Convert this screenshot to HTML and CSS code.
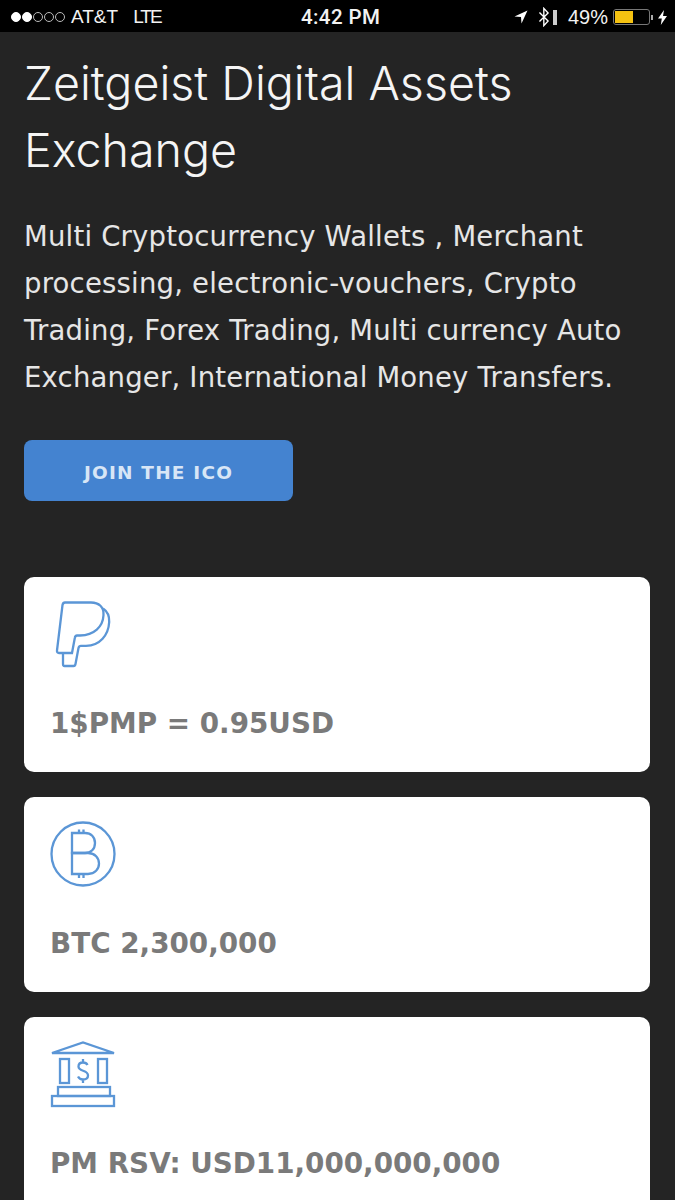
FILE: index.html
```html
<!DOCTYPE html>
<html lang="en">
<head>
    <meta charset="UTF-8">
    <meta name="viewport" content="width=device-width, initial-scale=1.0">
    <title>Zeitgeist Digital Assets Exchange</title>
    <link rel="stylesheet" href="styles.css">
</head>
<body>
    <div class="status-bar">
        <div class="status-left">
            <span class="signal">
                <i class="dot full"></i><i class="dot full"></i><i class="dot"></i><i class="dot"></i><i class="dot"></i>
            </span>
            <span class="carrier">AT&amp;T</span>
            <span class="network">LTE</span>
        </div>
        <div class="status-time">4:42 PM</div>
        <div class="status-right">
            <svg class="ico-location" width="14" height="14" viewBox="0 0 14 14"><path d="M13.5 .5 L.5 6.5 L7 7 L7.5 13.5 Z" fill="#fff"/></svg>
            <svg class="ico-bt" width="12" height="20" viewBox="0 0 12 22"><path d="M1 6 L10.500 15.500 L5.800 20.500 V1.500 L10.500 6.500 L1 16" fill="none" stroke="#fff" stroke-width="1.500"/></svg>
            <span class="bt-level"></span>
            <span class="percent">49%</span>
            <span class="battery"><span class="battery-fill"></span></span>
            <span class="battery-tip"></span>
            <svg class="ico-bolt" width="9" height="15" viewBox="0 0 9 15"><path d="M6 0 L0 8.500 H3.800 L2.800 15 L9 6 H5 Z" fill="#fff"/></svg>
        </div>
    </div>

    <main class="content">
        <h1>Zeitgeist Digital Assets Exchange</h1>
        <p class="intro">Multi Cryptocurrency Wallets , Merchant processing, electronic-vouchers, Crypto Trading, Forex Trading, Multi currency Auto Exchanger, International Money Transfers.</p>
        <a class="btn" href="#">JOIN THE ICO</a>

        <div class="cards">
            <div class="card">
                <svg class="card-icon" width="66" height="68" viewBox="0 0 66 68">
                    <path d="M15 1.500 H41 C49 1.500 54 6 53.500 14 C53 26 44 34 30 34.500 H27 C25.500 34.500 25 35.500 24.800 37 L22 52 H9 C7.500 52 6.800 51 7 49.500 L12.500 4 C12.800 2.500 13.500 1.500 15 1.500 Z"/>
                    <path d="M53 7.500 C57.500 10.500 59.500 15 59.200 21 C58.500 34 50 44.500 36 44.800 H31 C29.500 44.800 28.800 45.500 28.500 47 L25.500 63 C25.300 64.200 24.500 65 23.500 65 H14.500 C13.500 65 13 64.300 13 63 V52"/>
                </svg>
                <div class="card-text">1$PMP = 0.95USD</div>
            </div>
            <div class="card">
                <svg class="card-icon" width="66" height="68" viewBox="0 0 66 68">
                    <circle cx="33" cy="33" r="31.500"/>
                    <path d="M22 12 H35 C41 12 45 16 45 22 C45 28 41 32 35 32 H22 Z"/>
                    <path d="M22 32 H38 C45 32 49 37 49 42.500 C49 48 45 53 38 53 H22 Z"/>
                    <path d="M29 8.500 V12 M33.500 8.500 V12 M29 53 V57 M33.500 53 V57"/>
                </svg>
                <div class="card-text">BTC 2,300,000</div>
            </div>
            <div class="card">
                <svg class="card-icon" width="66" height="68" viewBox="0 0 66 68">
                    <path d="M2 12 L33 1.500 L64 12 Z"/>
                    <rect x="10" y="18" width="9" height="24"/>
                    <rect x="48" y="18" width="9" height="24"/>
                    <path d="M37.500 24 C36.800 22.500 35 21.500 33 21.500 C30.500 21.500 28.500 23 28.500 25.500 C28.500 31 38 28.500 38 34.500 C38 37 36 38.500 33 38.500 C30.500 38.500 29 37.500 28 35.500 M33 18 V21.500 M33 38.500 V42"/>
                    <rect x="8" y="46" width="52" height="9"/>
                    <rect x="2" y="55" width="62" height="10"/>
                </svg>
                <div class="card-text">PM RSV: USD11,000,000,000</div>
            </div>
        </div>
    </main>
</body>
</html>
```

FILE: styles.css
```css
html, body {
    margin: 0;
    padding: 0;
}
body {
    width: 675px;
    height: 1200px;
    overflow: hidden;
    background-color: #242424;
    font-family: "DejaVu Sans", Verdana, sans-serif;
}
.status-bar {
    height: 32px;
    box-sizing: border-box;
    padding: 2px 8px 0 11px;
    background-color: #000;
    color: #f2f2f2;
    display: flex;
    align-items: center;
    justify-content: space-between;
    font-family: "Liberation Sans", Arial, sans-serif;
    font-size: 19px;
    position: relative;
}
.status-left, .status-right {
    display: flex;
    align-items: center;
}
.signal {
    display: flex;
    gap: 1px;
    margin-right: 6px;
}
.dot {
    width: 10px;
    height: 10px;
    box-sizing: border-box;
    border: 1px solid #bbb;
    border-radius: 50%;
}
.dot.full {
    background-color: #fff;
    border-color: #fff;
}
.network {
    margin-left: 15px;
    letter-spacing: -2px;
}
.status-time {
    position: absolute;
    left: 301px;
    font-family: Roboto, sans-serif;
    font-weight: 500;
    font-size: 20.500px;
    letter-spacing: .4px;
}
.ico-location {
    margin-right: 10px;
}
.bt-level {
    width: 4px;
    height: 15px;
    background-color: #ccc;
    margin-left: 3px;
    margin-right: 11px;
}
.percent {
    font-size: 20px;
}
.battery {
    width: 37px;
    height: 16px;
    border: 1px solid #777;
    border-radius: 3px;
    margin-left: 5px;
    padding: 1px;
    box-sizing: border-box;
    display: flex;
}
.battery-fill {
    width: 18px;
    background-color: #f5c211;
}
.battery-tip {
    width: 2px;
    height: 5px;
    background-color: #aaa;
    margin-left: 1px;
    margin-right: 5px;
}
.content {
    padding: 0 25px 0 24px;
}
h1 {
    margin: 18px 0 0;
    font-family: Inter, "Liberation Sans", sans-serif;
    font-weight: 300;
    font-size: 46.600px;
    line-height: 67px;
    color: #f5f5f5;
}
.intro {
    margin: 29px 0 0;
    font-size: 27.500px;
    letter-spacing: .2px;
    line-height: 47px;
    color: #e6e6e6;
}
.btn {
    display: flex;
    align-items: center;
    justify-content: center;
    width: 269px;
    height: 61px;
    box-sizing: border-box;
    padding-top: 3px;
    margin-top: 39px;
    background-color: #4483d0;
    border-radius: 8px;
    color: #d8e6f6;
    font-size: 18.500px;
    font-weight: bold;
    letter-spacing: 1.200px;
    text-decoration: none;
}
.cards {
    display: flex;
    flex-direction: column;
    gap: 25px;
    margin-top: 76px;
}
.card {
    background-color: #fff;
    border-radius: 10px;
    height: 195px;
    box-sizing: border-box;
    padding: 24px 26px 0;
}
.card-icon {
    display: block;
    fill: none;
    stroke: #5b96d6;
    stroke-width: 2.300;
}
.card-text {
    margin-top: 38px;
    font-size: 27.800px;
    font-weight: bold;
    color: #7a7a7a;
}
```
